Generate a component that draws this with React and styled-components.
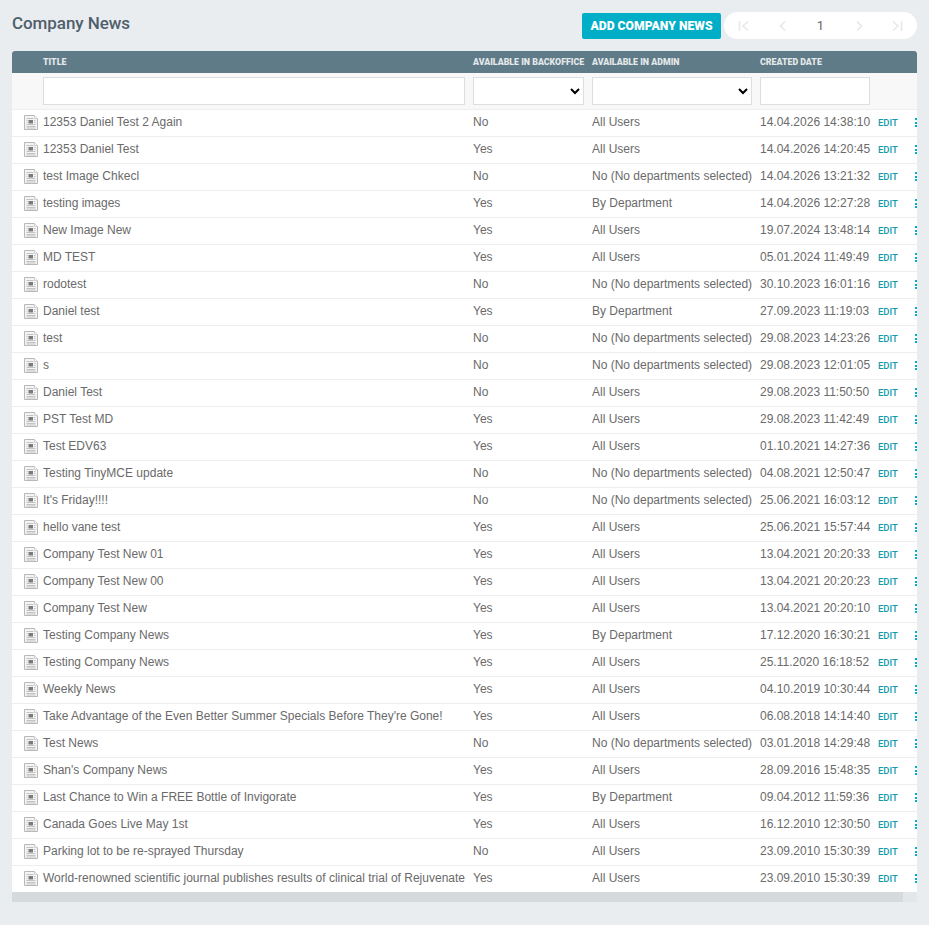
import React from "react";
import styled, { createGlobalStyle } from "styled-components";

const GlobalStyle = createGlobalStyle`
  html, body {
    margin: 0;
    padding: 0;
    background: #eaedf0;
    font-family: Roboto, "Liberation Sans", sans-serif;
  }
  * {
    box-sizing: border-box;
  }
`;

const Page = styled.div`
  width: 929px;
  height: 925px;
  padding: 12px 12px 0;
  overflow: hidden;
`;

const TopBar = styled.header`
  display: flex;
  align-items: flex-start;
  justify-content: space-between;
  height: 39px;
`;

const Title = styled.h1`
  margin: 1px 0 0;
  font-size: 17px;
  line-height: 20px;
  font-weight: 500;
  letter-spacing: -0.07px;
  color: #4f5f6b;
`;

const Actions = styled.div`
  display: flex;
  align-items: center;
  gap: 3px;
`;

const AddButton = styled.button`
  width: 139px;
  height: 26px;
  padding: 0;
  border: 0;
  border-radius: 2px;
  background: #00aec7;
  color: #fff;
  font-family: inherit;
  font-size: 12.2px;
  font-weight: 900;
`;

const Pager = styled.nav`
  display: grid;
  grid-template-columns: 40px 38px 37px 39px 38px;
  align-items: center;
  width: 193px;
  height: 27px;
  border-radius: 14px;
  background: #fff;
`;

const PagerIcon = styled.svg`
  justify-self: center;
  width: 12px;
  height: 12px;
  fill: none;
  stroke: #e6e8ea;
  stroke-width: 1.6;
`;

const PageNumber = styled.span`
  justify-self: center;
  font-size: 13px;
  color: #666;
`;

const Card = styled.section`
  width: 905px;
  border-radius: 3px 3px 0 0;
  overflow: hidden;
  background: #fff;
`;

const columns = "31px 430px 119px 168px 118px 37px 2px";

const HeadRow = styled.div`
  display: grid;
  grid-template-columns: ${columns};
  align-items: center;
  height: 22px;
  background: #607b88;
`;

const HeadCell = styled.div`
  grid-column: ${(props) => props.$col};
  font-size: 8.8px;
  font-weight: 900;
  color: #e3e8ea;
  white-space: nowrap;
`;

const FilterRow = styled.div`
  display: grid;
  grid-template-columns: ${columns};
  align-items: center;
  height: 36px;
  padding-bottom: 1px;
  background: #f8f8f8;
`;

const TextFilter = styled.input`
  grid-column: ${(props) => props.$col};
  width: ${(props) => props.$width}px;
  height: 28px;
  padding: 0 4px;
  border: 1px solid #dcdfe0;
  border-radius: 0;
  background: #fff;
  outline: none;
`;

const SelectFilter = styled.select`
  grid-column: ${(props) => props.$col};
  width: ${(props) => props.$width}px;
  height: 28px;
  border: 1px solid #dcdfe0;
  border-radius: 0;
  background-color: #fff;
  color: #000;
  outline: none;
`;

const Row = styled.div`
  display: grid;
  grid-template-columns: ${columns};
  align-items: center;
  height: 27px;
  border-top: 1px solid #eceeef;
  padding-bottom: 2px;
  font-family: "Liberation Sans", Arial, sans-serif;
  font-size: 12px;
  color: #6a6a6a;
  white-space: nowrap;
`;

const IconCell = styled.div`
  display: flex;
  justify-content: flex-end;
  padding-right: 5px;
`;

const DocIcon = styled.svg`
  display: block;
  width: 14px;
  height: 15px;
`;

const EditLink = styled.a`
  font-family: Roboto, sans-serif;
  font-size: 9.5px;
  font-weight: 500;
  color: #119aab;
  padding-top: 1px;
`;

const MoreDots = styled.span`
  display: flex;
  flex-direction: column;
  gap: 1.5px;
  padding-top: 1px;
  i {
    display: block;
    width: 2px;
    height: 2px;
    background: #00aec7;
  }
`;

const ScrollTrack = styled.div`
  display: flex;
  height: 10px;
  background: #e3e7e9;
`;

const ScrollThumb = styled.div`
  width: 891px;
  background: #d5dbdd;
`;

const News = () => (
  <DocIcon viewBox="0 0 14 15">
    <path d="M.5.5H10.5L13.5 3.5V14.5H.5Z" fill="#f4f4f4" stroke="#b8b8b8" />
    <path d="M10.5.5V3.5H13.5" fill="#fff" stroke="#cfcfcf" />
    <path d="M2.5 3.5H9.5M2.5 5.5H3.5M2.5 7.5H3.5M2.5 9.5H11.5M2.5 11.5H11.5M2.5 13H11.5M10 5.5H11.5M10 7.5H11.5" stroke="#c2c2c2" />
    <rect x="4.5" y="5" width="4.5" height="3.5" fill="#7a7a7a" />
  </DocIcon>
);

const NO_DEPT = "No (No departments selected)";

const rows = [
  ["12353 Daniel Test 2 Again", "No", "All Users", "14.04.2026 14:38:10"],
  ["12353 Daniel Test", "Yes", "All Users", "14.04.2026 14:20:45"],
  ["test Image Chkecl", "No", NO_DEPT, "14.04.2026 13:21:32"],
  ["testing images", "Yes", "By Department", "14.04.2026 12:27:28"],
  ["New Image New", "Yes", "All Users", "19.07.2024 13:48:14"],
  ["MD TEST", "Yes", "All Users", "05.01.2024 11:49:49"],
  ["rodotest", "No", NO_DEPT, "30.10.2023 16:01:16"],
  ["Daniel test", "Yes", "By Department", "27.09.2023 11:19:03"],
  ["test", "No", NO_DEPT, "29.08.2023 14:23:26"],
  ["s", "No", NO_DEPT, "29.08.2023 12:01:05"],
  ["Daniel Test", "No", "All Users", "29.08.2023 11:50:50"],
  ["PST Test MD", "Yes", "All Users", "29.08.2023 11:42:49"],
  ["Test EDV63", "Yes", "All Users", "01.10.2021 14:27:36"],
  ["Testing TinyMCE update", "No", NO_DEPT, "04.08.2021 12:50:47"],
  ["It's Friday!!!!", "No", NO_DEPT, "25.06.2021 16:03:12"],
  ["hello vane test", "Yes", "All Users", "25.06.2021 15:57:44"],
  ["Company Test New 01", "Yes", "All Users", "13.04.2021 20:20:33"],
  ["Company Test New 00", "Yes", "All Users", "13.04.2021 20:20:23"],
  ["Company Test New", "Yes", "All Users", "13.04.2021 20:20:10"],
  ["Testing Company News", "Yes", "By Department", "17.12.2020 16:30:21"],
  ["Testing Company News", "Yes", "All Users", "25.11.2020 16:18:52"],
  ["Weekly News", "Yes", "All Users", "04.10.2019 10:30:44"],
  ["Take Advantage of the Even Better Summer Specials Before They're Gone!", "Yes", "All Users", "06.08.2018 14:14:40"],
  ["Test News", "No", NO_DEPT, "03.01.2018 14:29:48"],
  ["Shan's Company News", "Yes", "All Users", "28.09.2016 15:48:35"],
  ["Last Chance to Win a FREE Bottle of Invigorate", "Yes", "By Department", "09.04.2012 11:59:36"],
  ["Canada Goes Live May 1st", "Yes", "All Users", "16.12.2010 12:30:50"],
  ["Parking lot to be re-sprayed Thursday", "No", "All Users", "23.09.2010 15:30:39"],
  ["World-renowned scientific journal publishes results of clinical trial of Rejuvenate", "Yes", "All Users", "23.09.2010 15:30:39"],
];

export default function App() {
  return (
    <Page>
      <GlobalStyle />
      <TopBar>
        <Title>Company News</Title>
        <Actions>
          <AddButton>ADD COMPANY NEWS</AddButton>
          <Pager>
            <PagerIcon viewBox="0 0 12 12"><path d="M1.5 1V11M10 1.5 5 6l5 4.5" /></PagerIcon>
            <PagerIcon viewBox="0 0 12 12"><path d="M8 1.5 3.5 6 8 10.5" /></PagerIcon>
            <PageNumber>1</PageNumber>
            <PagerIcon viewBox="0 0 12 12"><path d="M4 1.5 8.5 6 4 10.5" /></PagerIcon>
            <PagerIcon viewBox="0 0 12 12"><path d="M10.5 1V11M2 1.5 7 6l-5 4.5" /></PagerIcon>
          </Pager>
        </Actions>
      </TopBar>
      <Card>
        <HeadRow>
          <HeadCell $col={2}>TITLE</HeadCell>
          <HeadCell $col={3}>AVAILABLE IN BACKOFFICE</HeadCell>
          <HeadCell $col={4}>AVAILABLE IN ADMIN</HeadCell>
          <HeadCell $col={5}>CREATED DATE</HeadCell>
        </HeadRow>
        <FilterRow>
          <TextFilter $col={2} $width={422} />
          <SelectFilter $col={3} $width={111} />
          <SelectFilter $col={4} $width={160} />
          <TextFilter $col={5} $width={110} />
        </FilterRow>
        {rows.map(([title, backoffice, admin, created], i) => (
          <Row key={i}>
            <IconCell><News /></IconCell>
            <span>{title}</span>
            <span>{backoffice}</span>
            <span>{admin}</span>
            <span>{created}</span>
            <EditLink>EDIT</EditLink>
            <MoreDots><i /><i /><i /></MoreDots>
          </Row>
        ))}
        <ScrollTrack><ScrollThumb /></ScrollTrack>
      </Card>
    </Page>
  );
}
